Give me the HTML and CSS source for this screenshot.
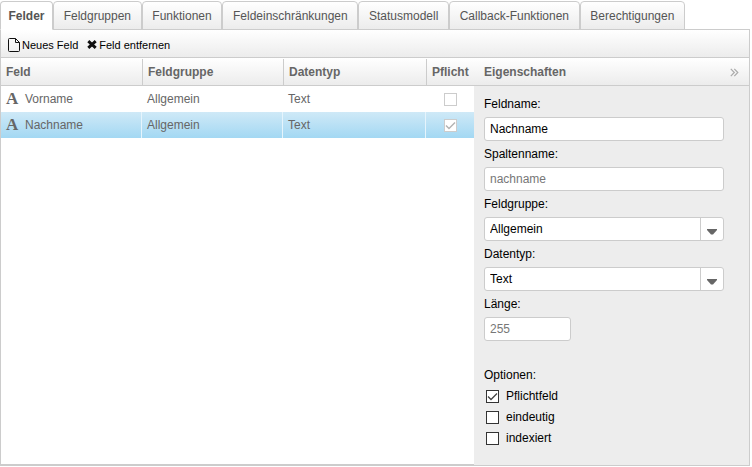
FILE: index.html
```html
<!DOCTYPE html>
<html lang="de">
<head>
<meta charset="utf-8">
<title>Felder</title>
<link rel="stylesheet" href="styles.css">
</head>
<body>
<nav class="tabs">
  <button class="tab tab-active" type="button">Felder</button>
  <button class="tab" type="button">Feldgruppen</button>
  <button class="tab" type="button">Funktionen</button>
  <button class="tab" type="button">Feldeinschränkungen</button>
  <button class="tab" type="button">Statusmodell</button>
  <button class="tab" type="button">Callback-Funktionen</button>
  <button class="tab" type="button">Berechtigungen</button>
</nav>
<main class="frame">
  <div class="toolbar">
    <button class="tool" type="button">
      <svg width="12" height="14" viewBox="0 0 12 14" fill="none" stroke="#111"><path d="M.5 1.5Q.5.5 1.5.5H7.5L11.5 4.5V12.5Q11.5 13.5 10.5 13.5H1.5Q.5 13.5.5 12.5ZM7.5.5V4.5H11.5"/></svg>
      Neues Feld
    </button>
    <button class="tool" type="button">
      <svg width="10" height="9" viewBox="0 0 10 9" stroke="#111" stroke-width="3"><path d="M1.3 1.2L8.7 7.8M8.7 1.2L1.3 7.8"/></svg>
      Feld entfernen
    </button>
  </div>
  <div class="panes">
    <section class="list">
      <table class="grid">
        <colgroup><col><col class="col-group"><col class="col-type"><col class="col-required"></colgroup>
        <thead>
          <tr><th>Feld</th><th>Feldgruppe</th><th>Datentyp</th><th>Pflicht</th></tr>
        </thead>
        <tbody>
          <tr>
            <td><span class="name"><span class="type-icon" aria-hidden="true">A</span>Vorname</span></td>
            <td>Allgemein</td><td>Text</td>
            <td class="cell-check"><span class="check"><input type="checkbox" aria-label="Vorname Pflicht" disabled></span></td>
          </tr>
          <tr class="selected">
            <td><span class="name"><span class="type-icon" aria-hidden="true">A</span>Nachname</span></td>
            <td>Allgemein</td><td>Text</td>
            <td class="cell-check"><span class="check"><input type="checkbox" aria-label="Nachname Pflicht" checked disabled><svg width="13" height="13" viewBox="0 0 13 13" fill="none" stroke="#b3b3b3" stroke-width="1.5"><path d="M2 6.5L5 9.5L11 3.5"/></svg></span></td>
          </tr>
        </tbody>
      </table>
    </section>
    <section class="props">
      <header class="props-head">
        <h2>Eigenschaften</h2>
        <button class="collapse" type="button" aria-label="Einklappen">
          <svg width="9" height="9" viewBox="0 0 9 9" fill="none" stroke="#aaa" stroke-width="1.2"><path d="M.8.8L4.3 4.5L.8 8.2M4.3.8L7.8 4.5L4.3 8.2"/></svg>
        </button>
      </header>
      <form class="form">
        <div class="field"><label for="fname">Feldname:</label><input class="box" id="fname" type="text" value="Nachname"></div>
        <div class="field"><label for="cname">Spaltenname:</label><input class="box" id="cname" type="text" placeholder="nachname"></div>
        <div class="field"><label for="fgroup">Feldgruppe:</label>
          <div class="combo"><select class="box" id="fgroup"><option>Allgemein</option></select>
            <span class="arrow"><svg width="10" height="6" viewBox="0 0 10 6"><path d="M0 0H10V1L6 5.5H4L0 1Z" fill="#666"/></svg></span></div>
        </div>
        <div class="field"><label for="dtype">Datentyp:</label>
          <div class="combo"><select class="box" id="dtype"><option>Text</option></select>
            <span class="arrow"><svg width="10" height="6" viewBox="0 0 10 6"><path d="M0 0H10V1L6 5.5H4L0 1Z" fill="#666"/></svg></span></div>
        </div>
        <div class="field"><label for="len">Länge:</label><input class="box box-short" id="len" type="text" placeholder="255"></div>
        <fieldset class="options">
          <legend>Optionen:</legend>
          <label class="option"><span class="check"><input type="checkbox" checked><svg width="13" height="13" viewBox="0 0 13 13" fill="none" stroke="#444" stroke-width="1.3"><path d="M2 6.5L5 9.5L11 3.5"/></svg></span>Pflichtfeld</label>
          <label class="option"><span class="check"><input type="checkbox"></span>eindeutig</label>
          <label class="option"><span class="check"><input type="checkbox"></span>indexiert</label>
        </fieldset>
      </form>
    </section>
  </div>
</main>
</body>
</html>
```
FILE: styles.css
```css
* { box-sizing: border-box; }

body {
  display: flex;
  flex-direction: column;
  min-height: 100vh;
  margin: 0;
  padding: 1px 2px 1px 0;
  background: #fff;
  color: #000;
  font: 12px/16px "Liberation Sans", Arial, sans-serif;
}

button, input, select { font: inherit; color: inherit; }

.tabs {
  display: flex;
  max-width: 685px;
  margin-bottom: -1px;
}

.tab {
  flex: 1 1 auto;
  height: 29px;
  padding: 0 7px;
  border: 1px solid #ccc;
  border-radius: 4px 4px 0 0;
  background: linear-gradient(#fff, #ececec);
  color: #555;
  white-space: nowrap;
}

.tab-active {
  flex: 0 0 53px;
  position: relative;
  border-bottom-color: #fff;
  background: #fff;
  font-weight: bold;
}

.frame {
  flex: 1;
  display: flex;
  flex-direction: column;
  border: 1px solid #ccc;
}

.toolbar {
  display: flex;
  align-items: center;
  gap: 9px;
  height: 28px;
  padding: 2px 7px 0;
  border-bottom: 1px solid #ccc;
  background: linear-gradient(#fff, #ececec);
}

.tool {
  display: flex;
  align-items: center;
  gap: 2px;
  padding: 0;
  border: 0;
  background: none;
  font-size: 11px;
}

.panes { flex: 1; display: flex; }

.list {
  flex: 1;
  border-bottom: 1px solid #ccc;
}

.grid {
  width: 100%;
  table-layout: fixed;
  border-collapse: separate;
  border-spacing: 0;
  color: #666;
}

.col-group { width: 141px; }
.col-type { width: 143px; }
.col-required { width: 48px; }

th {
  height: 28px;
  padding: 0 5px;
  border-bottom: 1px solid #ccc;
  background: linear-gradient(#ccc, #ccc) left bottom / 1px 26px no-repeat, linear-gradient(#fff, #ececec);
  text-align: left;
}

th + th { padding: 0 0 0 6px; }

th:first-child { background: linear-gradient(#fff, #ececec); }

td {
  height: 26px;
  padding: 0 5px;
  border-right: 1px solid transparent;
}

td:last-child { border-right: 0; }

.selected td {
  border-right-color: #e6f4fc;
  background: linear-gradient(#cfe9f7, #a3d8f3) border-box;
}

.name { display: flex; align-items: center; gap: 6px; }

.type-icon {
  width: 13px;
  font: bold 17px/16px "Liberation Serif", serif;
}

.cell-check { text-align: center; }

.check {
  display: inline-block;
  position: relative;
  width: 13px;
  height: 13px;
  vertical-align: middle;
}

.check input {
  display: block;
  appearance: none;
  width: 13px;
  height: 13px;
  margin: 0;
  border: 1px solid #333;
  background: #fff;
}

.check input:disabled { border-color: #ccc; }

.check svg {
  position: absolute;
  inset: 0;
  pointer-events: none;
}

.props {
  flex: 0 0 275px;
  background: #ededed;
}

.props-head {
  display: flex;
  align-items: center;
  justify-content: space-between;
  height: 28px;
  padding: 0 10px;
  border-bottom: 1px solid #ccc;
  background: linear-gradient(#fff, #ececec);
  color: #666;
}

.props-head h2 { margin: 0; font-size: 12px; }

.collapse {
  display: flex;
  padding: 2px 0 0;
  border: 0;
  background: none;
}

.form { padding: 10px 25px 10px 10px; }

.field {
  display: flex;
  flex-direction: column;
  gap: 5px;
  margin-bottom: 5px;
}

.box {
  width: 100%;
  height: 24px;
  padding: 0 5px;
  border: 1px solid #ccc;
  border-radius: 3px;
  background: #fff;
  appearance: none;
}

.box::placeholder { color: #777; }

.box-short { width: 87px; }

.combo { position: relative; display: flex; }

.arrow {
  position: absolute;
  top: 1px;
  right: 1px;
  bottom: 1px;
  display: flex;
  align-items: center;
  justify-content: center;
  width: 23px;
  padding-top: 5px;
  border-left: 1px solid #ccc;
  pointer-events: none;
}

.options {
  margin: 26px 0 0;
  padding: 0;
  border: 0;
}

.options legend { padding: 0 0 5px; }

.option {
  display: flex;
  align-items: center;
  gap: 7px;
  margin-bottom: 5px;
  padding-left: 2px;
}
```
